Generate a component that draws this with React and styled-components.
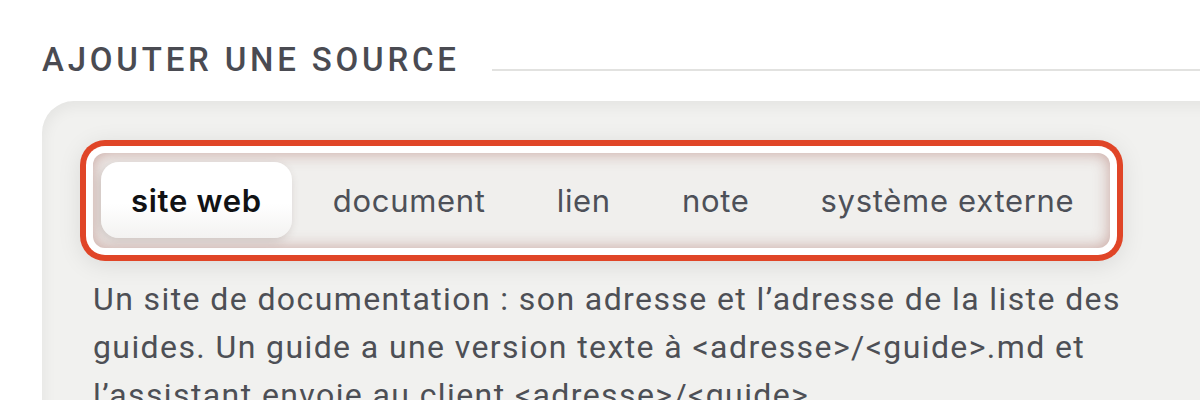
import styled, { createGlobalStyle } from 'styled-components';

const GlobalStyle = createGlobalStyle`
  html, body {
    margin: 0;
    padding: 0;
    background: #ffffff;
    overflow: hidden;
  }
`;

const Page = styled.div`
  width: 1200px;
  height: 400px;
  padding: 38px 0 0 42px;
  box-sizing: border-box;
  overflow: hidden;
`;

const HeadRow = styled.div`
  display: flex;
  align-items: center;
  gap: 32px;
`;

const Heading = styled.h2`
  margin: 0;
  font-family: Roboto, 'Liberation Sans', sans-serif;
  font-weight: 500;
  font-size: 33px;
  line-height: 44px;
  letter-spacing: 3.8px;
  color: #4a4b52;
  white-space: nowrap;
`;

const Rule = styled.div`
  flex: 1;
  height: 2px;
  margin-top: 20px;
  background: #e2e2e0;
`;

const Card = styled.div`
  margin-top: 19px;
  width: 1200px;
  height: 400px;
  padding: 52px 0 0 51px;
  box-sizing: border-box;
  border-radius: 32px 0 0 0;
  background: #f1f1ef;
  box-shadow: inset 2px 6px 14px rgba(0, 0, 0, 0.05);
`;

const Track = styled.div`
  display: flex;
  align-items: center;
  gap: 11px;
  width: 1017px;
  box-sizing: border-box;
  padding: 9px 9px 10px 8px;
  border-radius: 12px;
  background: #f0efed;
  box-shadow: inset 0 0 16px rgba(150, 70, 60, 0.45), 0 0 0 7px #ffffff,
    0 0 0 13px #e04527, 0 4px 24px 12px rgba(0, 0, 0, 0.1);
`;

const Tab = styled.button`
  height: 76px;
  padding: 0 30px;
  border: none;
  border-radius: 18px;
  font-family: Inter, 'Noto Sans', sans-serif;
  font-size: 31px;
  letter-spacing: 0.7px;
  font-weight: ${(props) => (props.active ? 600 : 400)};
  color: ${(props) => (props.active ? '#111214' : '#4d5058')};
  background: ${(props) =>
    props.active ? 'linear-gradient(#ffffff 55%, #f3f2f1)' : 'transparent'};
  box-shadow: ${(props) =>
    props.active ? '-2px 3px 10px rgba(90, 60, 55, 0.2)' : 'none'};
  cursor: pointer;
  white-space: nowrap;
`;

const Text = styled.p`
  margin: 27px 0 0;
  width: 1032px;
  font-family: Roboto, 'Liberation Sans', sans-serif;
  font-size: 32px;
  letter-spacing: 1.4px;
  line-height: 48px;
  color: #4d4f55;
`;

const tabs = ['site web', 'document', 'lien', 'note', 'système externe'];

export default function App() {
  return (
    <>
      <GlobalStyle />
      <Page>
        <HeadRow>
          <Heading>AJOUTER UNE SOURCE</Heading>
          <Rule />
        </HeadRow>
        <Card>
          <Track>
            {tabs.map((t, i) => (
              <Tab key={t} active={i === 0}>
                {t}
              </Tab>
            ))}
          </Track>
          <Text>
            Un site de documentation : son adresse et l’adresse de la liste des
            guides. Un guide a une version texte à &lt;adresse&gt;/&lt;guide&gt;.md et
            l’assistant envoie au client &lt;adresse&gt;/&lt;guide&gt;.
          </Text>
        </Card>
      </Page>
    </>
  );
}
